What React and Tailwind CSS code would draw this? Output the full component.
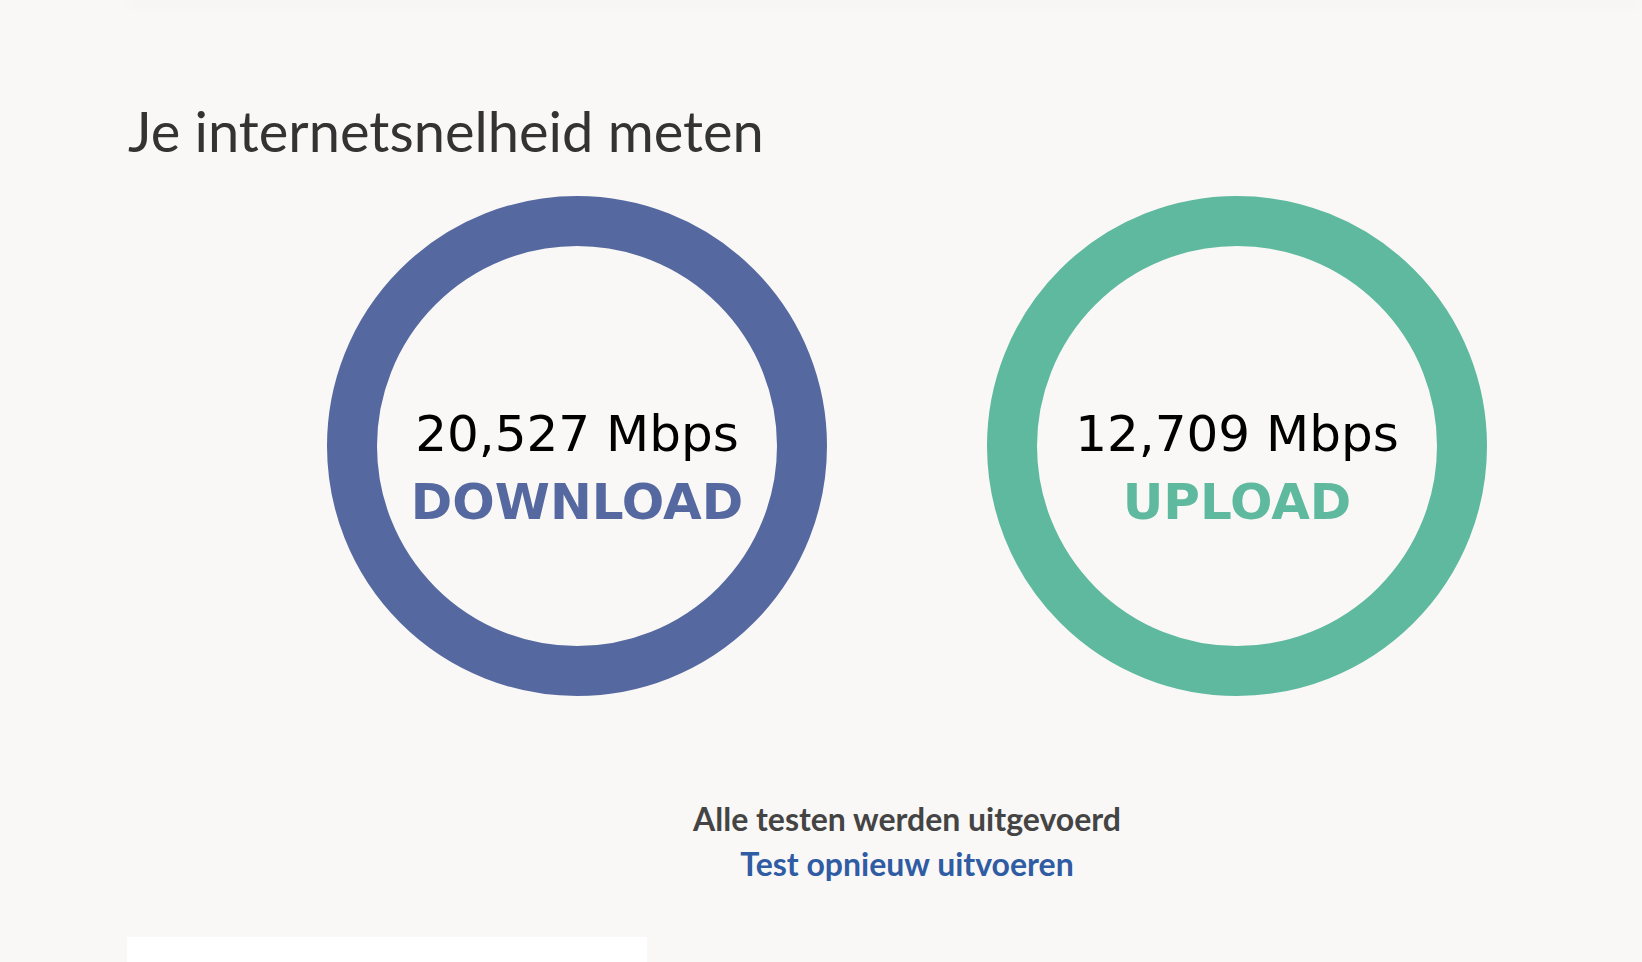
import React from 'react';

const results = [
  { id: 'download', value: '20,527 Mbps', label: 'DOWNLOAD', ring: 'border-[#5568a0]', text: 'text-[#5568a0]' },
  { id: 'upload', value: '12,709 Mbps', label: 'UPLOAD', ring: 'border-[#5eb99f]', text: 'text-[#5eb99f]' },
];

const Gauge = ({ value, label, ring, text }) => (
  <div className="w-[660px] flex justify-center">
    <div className={`w-[500px] h-[500px] rounded-full border-[50px] ${ring} flex flex-col items-center justify-center pt-[44px]`}>
      <div className="font-['DejaVu_Sans',sans-serif] text-[50px] leading-[68px] text-black whitespace-nowrap">{value}</div>
      <div className={`font-['DejaVu_Sans',sans-serif] font-bold text-[50px] leading-[68px] ${text}`}>{label}</div>
    </div>
  </div>
);

const App = () => {
  return (
    <div className="min-h-screen bg-[#f9f8f6] overflow-hidden font-['Lato',sans-serif]">
      {/* header sits above the fold, only its shadow shows */}
      <div className="ml-[126px] h-px -mt-px bg-[#e8e7e4] shadow-[0_2px_14px_rgba(0,0,0,0.16)]" />

      <h1 className="pl-[128px] pt-[99px] text-[56px] leading-[64px] font-normal text-[#333333] whitespace-nowrap">
        Je internetsnelheid meten
      </h1>

      <div className="flex ml-[247px] mt-[33px]">
        {results.map((r) => (
          <Gauge key={r.id} {...r} />
        ))}
      </div>

      <div className="ml-[247px] w-[1320px] mt-[100px] flex flex-col items-center text-[32px] leading-[45px] font-bold">
        <p className="text-[#444444]">Alle testen werden uitgevoerd</p>
        <a href="#" className="text-[#2f5ca3]">Test opnieuw uitvoeren</a>
      </div>

      <div className="ml-[127px] mt-[51px] w-[520px] h-[200px] bg-white" />
    </div>
  );
};

export default App;
